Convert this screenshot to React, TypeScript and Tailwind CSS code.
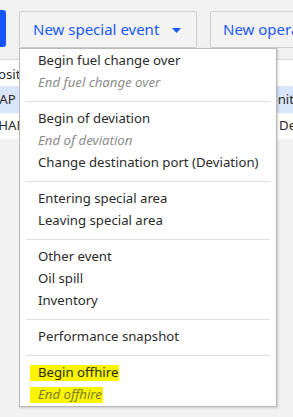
import React from "react";

const font = { fontFamily: '"Noto Sans", "Open Sans", sans-serif' };

type Item = { label: string; muted?: boolean; hl?: boolean } | "sep";

const items: Item[] = [
  { label: "Begin fuel change over" },
  { label: "End fuel change over", muted: true },
  "sep",
  { label: "Begin of deviation" },
  { label: "End of deviation", muted: true },
  { label: "Change destination port (Deviation)" },
  "sep",
  { label: "Entering special area" },
  { label: "Leaving special area" },
  "sep",
  { label: "Other event" },
  { label: "Oil spill" },
  { label: "Inventory" },
  "sep",
  { label: "Performance snapshot" },
  "sep",
  { label: "Begin offhire", hl: true },
  { label: "End offhire", muted: true, hl: true },
];

export default function App() {
  return (
    <div className="relative w-[293px] h-[417px] overflow-hidden bg-[#f2f2f2]" style={font}>
      {/* Toolbar */}
      <div className="flex items-start gap-[13px] pt-[11px] h-[60px] border-b border-[#d6d6d6] bg-[#f1f1f1]">
        <div className="w-[6px] h-[37px] -mt-[1px] bg-[#1656ff] rounded-r-[3px] shrink-0" />
        <div className="w-[178px] h-[37px] shrink-0 flex items-center border border-[#cfcfcf] rounded-[2px] bg-[#f3f3f3] pl-[13px] text-[15px] text-[#1859f5]">
          <span>New special event</span>
          <svg width="9" height="5" viewBox="0 0 9 5" className="ml-[13px] mt-[1px]">
            <path d="M0 0 H9 L4.5 5 Z" fill="#1859f5" />
          </svg>
        </div>
        <div className="w-[120px] h-[37px] shrink-0 flex items-center border border-[#cfcfcf] rounded-[2px] bg-[#f3f3f3] pl-[12px] text-[15px] text-[#1859f5] whitespace-nowrap">
          New operation
        </div>
      </div>
      {/* Table */}
      <div className="text-[13.2px] text-[#2a2a2a]">
        <div className="h-[27px] flex items-center pt-[4px] bg-white border-b border-[#e2e2e2] whitespace-nowrap">
          <span className="-ml-[10px] w-[278px] shrink-0">Position</span>
        </div>
        <div className="h-[26px] flex items-center bg-[#d9e5fb] whitespace-nowrap">
          <span className="-ml-[9px] w-[277px] shrink-0">CAP</span>
          <span>Unit</span>
        </div>
        <div className="h-[26px] flex items-center bg-white whitespace-nowrap">
          <span className="-ml-[10px] w-[289px] shrink-0">CHAM</span>
          <span>Dep</span>
        </div>
      </div>

      {/* Dropdown menu */}
      <div className="absolute left-[19px] top-[48px] w-[258px] bg-white border border-[#b9b9b9] pt-[1px] shadow-[1px_1px_2px_rgba(0,0,0,0.18)]">
        {items.map((it, i) =>
          it === "sep" ? (
            <div key={i} className="mt-[7px] mb-[6px] mx-[6px] h-px bg-[#e3dde3]" />
          ) : (
            <div
              key={i}
              className={`h-[22px] flex items-center pl-[18px] text-[13.2px] whitespace-nowrap ${
                it.muted ? "italic text-[#8c8c8c]" : "text-[#2b2b2b]"
              }`}
            >
              {it.hl ? (
                <span
                  className={`-ml-[8px] pl-[8px] pr-[1px] h-[16px] flex items-center bg-[#faf400] ${
                    it.muted ? "text-[#7d7d2a]" : "text-[#2b2b10]"
                  }`}
                >
                  {it.label}
                </span>
              ) : (
                it.label
              )}
            </div>
          )
        )}
      </div>
    </div>
  );
}
